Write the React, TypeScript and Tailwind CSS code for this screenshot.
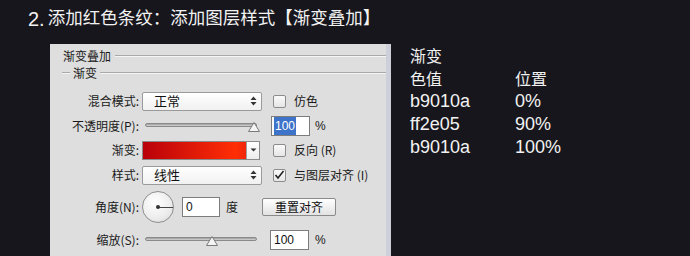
import React from "react";

const cjk = { fontFamily: '"Noto Sans CJK SC", "Liberation Sans", sans-serif' };
const latin = { fontFamily: '"Liberation Sans", "Noto Sans CJK SC", sans-serif' };

function Arrows() {
  return (
    <svg width="7" height="10" viewBox="0 0 7 10">
      <path d="M3.5 0.5 L6.5 4 L0.5 4 Z" fill="#333" />
      <path d="M3.5 9.5 L6.5 6 L0.5 6 Z" fill="#333" />
    </svg>
  );
}

function Select({ value }: { value: string }) {
  return (
    <div className="flex h-[19px] w-[120px] items-center justify-between rounded-[2px] border border-[#9a9a9a] bg-gradient-to-b from-white to-[#f1f1f1] pl-[11px] pr-[4px] text-[13px] text-[#111]">
      <span style={cjk}>{value}</span>
      <Arrows />
    </div>
  );
}

function Check({ checked, label }: { checked?: boolean; label: string }) {
  return (
    <div className="ml-[11px] flex items-center gap-[8px]">
      <div className="flex h-[13px] w-[13px] items-center justify-center rounded-[2px] border border-[#8c8c8c] bg-gradient-to-b from-[#fafafa] to-[#e6e6e6]">
        {checked && (
          <svg width="11" height="10" viewBox="0 0 11 10">
            <path d="M1.5 5 L4 8 L9.5 1" stroke="#222" strokeWidth="1.6" fill="none" />
          </svg>
        )}
      </div>
      <span className="text-[12px] text-[#1a1a1a]" style={cjk}>
        {label}
      </span>
    </div>
  );
}

function Slider({ at }: { at: number }) {
  return (
    <div className="relative ml-[3px] h-[14px] w-[112px]">
      <div className="absolute left-0 right-0 top-[4px] h-[4px] rounded-full border border-[#8a8a8a] bg-gradient-to-b from-[#9a9a9a] to-[#d8d8d8]" />
      <svg className="absolute top-[3px]" style={{ left: at - 6 }} width="12" height="10" viewBox="0 0 12 10">
        <path d="M6 0.5 L11.5 9.5 L0.5 9.5 Z" fill="#f4f4f4" stroke="#7a7a7a" />
      </svg>
    </div>
  );
}

function NumBox({ value, selected, w = 39 }: { value: string; selected?: boolean; w?: number }) {
  return (
    <div
      className="flex h-[20px] items-center border border-[#7d7d7d] bg-white pl-[2px] text-[12px] text-[#111]"
      style={{ width: w, ...latin }}
    >
      {selected ? <span className="bg-[#3d74c9] px-[1px] text-white">{value}</span> : <span className="pl-[1px]">{value}</span>}
    </div>
  );
}

function Label({ text }: { text: string }) {
  return (
    <div className="w-[92px] pr-[3px] text-right text-[12px] text-[#1a1a1a]" style={cjk}>
      {text}
    </div>
  );
}

export default function App() {
  return (
    <div className="h-[256px] w-[690px] overflow-hidden bg-[#17161c]">
      <div className="flex h-[44px] items-start pl-[28px] pt-[4px] text-[17.5px] text-[#f2f2f2]" style={cjk}>
        <span style={latin} className="mr-[3px] text-[20px]">2.</span>
        添加红色条纹：添加图层样式【渐变叠加】
      </div>

      <div className="flex">
        <div className="ml-[50px] h-[212px] w-[341px] border-r-[5px] border-[#cdd0d8] bg-[#dedede]">
          <div className="flex h-[24px] items-center pl-[13px]">
            <span className="text-[12px] text-[#1a1a1a]" style={cjk}>渐变叠加</span>
            <div className="ml-[4px] h-[2px] flex-1 border-t border-b border-t-[#a9a9a9] border-b-[#f5f5f5]" />
          </div>
          <div className="flex h-[10px] items-center pl-[12px]">
            <div className="h-[2px] w-[8px] border-t border-b border-t-[#a9a9a9] border-b-[#f5f5f5]" />
            <span className="mx-[3px] text-[12px] text-[#1a1a1a]" style={cjk}>渐变</span>
            <div className="h-[2px] flex-1 border-t border-b border-t-[#a9a9a9] border-b-[#f5f5f5]" />
          </div>

          <div className="mt-[13px] flex h-[20px] items-center">
            <Label text="混合模式:" />
            <Select value="正常" />
            <Check label="仿色" />
          </div>

          <div className="mt-[5px] flex h-[20px] items-center">
            <Label text="不透明度(P):" />
            <Slider at={109} />
            <div className="ml-[14px]">
              <NumBox value="100" selected />
            </div>
            <span className="ml-[5px] text-[12px] text-[#1a1a1a]" style={latin}>%</span>
          </div>

          <div className="mt-[4px] flex h-[20px] items-center">
            <Label text="渐变:" />
            <div className="flex h-[19px] w-[118px] border border-[#8a8a8a]">
              <div className="h-full flex-1 bg-[linear-gradient(to_right,#b9010a,#ff2e05_90%,#f0260a)]" />
              <div className="flex w-[13px] items-center justify-center border-l border-[#a0a0a0] bg-gradient-to-b from-white to-[#ececec]">
                <svg width="7" height="4" viewBox="0 0 7 4">
                  <path d="M0.5 0.5 L6.5 0.5 L3.5 3.5 Z" fill="#333" />
                </svg>
              </div>
            </div>
            <div className="ml-[2px]">
              <Check label="反向 (R)" />
            </div>
          </div>

          <div className="mt-[5px] flex h-[20px] items-center">
            <Label text="样式:" />
            <Select value="线性" />
            <Check checked label="与图层对齐 (I)" />
          </div>

          <div className="mt-[6px] flex h-[32px] items-center">
            <Label text="角度(N):" />
            <div className="relative h-[32px] w-[32px] rounded-full border border-[#8e8e8e] bg-[radial-gradient(circle_at_40%_35%,#ffffff,#ececec_60%,#d4d4d4)]">
              <div className="absolute left-[15px] top-[15px] h-[1px] w-[15px] bg-[#444]" />
              <div className="absolute left-[13px] top-[13px] h-[4px] w-[4px] rounded-full bg-[#333]" />
            </div>
            <div className="ml-[8px]">
              <NumBox value="0" w={38} />
            </div>
            <span className="ml-[6px] text-[12px] text-[#1a1a1a]" style={cjk}>度</span>
            <button
              className="ml-[24px] flex h-[18px] w-[74px] items-center justify-center rounded-[2px] border border-[#8a8a8a] bg-gradient-to-b from-white to-[#e2e2e2] text-[12px] text-[#111]"
              style={cjk}
            >
              重置对齐
            </button>
          </div>

          <div className="mt-[7px] flex h-[20px] items-center">
            <Label text="缩放(S):" />
            <Slider at={67} />
            <div className="ml-[13px]">
              <NumBox value="100" />
            </div>
            <span className="ml-[6px] text-[12px] text-[#1a1a1a]" style={latin}>%</span>
          </div>
        </div>

        <div className="ml-[19px] text-[#f2f2f2]">
          <div className="grid grid-cols-[105px_auto] leading-[23px]">
            <div className="col-span-2 text-[16px]" style={cjk}>渐变</div>
            <div className="text-[16px]" style={cjk}>色值</div>
            <div className="text-[16px]" style={cjk}>位置</div>
            <div className="text-[18px]" style={latin}>b9010a</div>
            <div className="text-[18px]" style={latin}>0%</div>
            <div className="text-[18px]" style={latin}>ff2e05</div>
            <div className="text-[18px]" style={latin}>90%</div>
            <div className="text-[18px]" style={latin}>b9010a</div>
            <div className="text-[18px]" style={latin}>100%</div>
          </div>
        </div>
      </div>
    </div>
  );
}
